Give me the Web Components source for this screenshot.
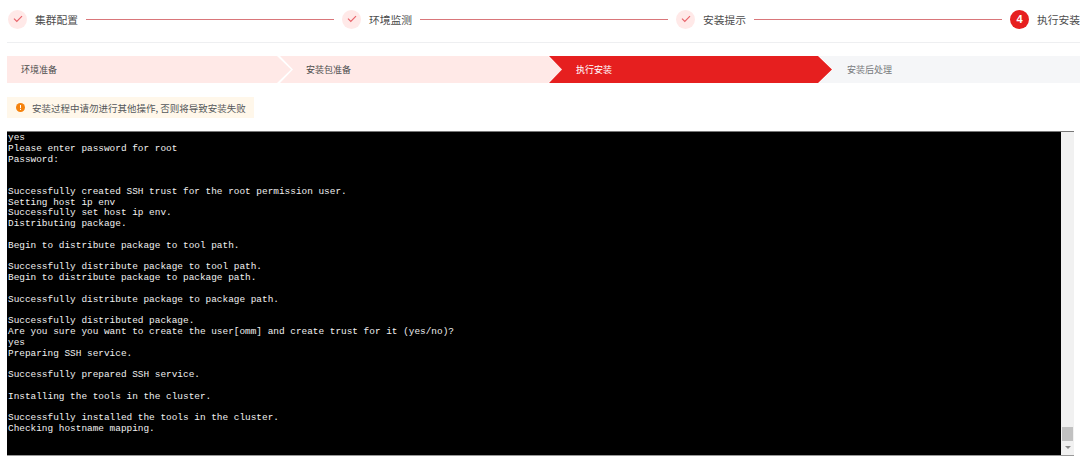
<!DOCTYPE html>
<html>
<head>
<meta charset="utf-8">
<style>
  html, body { margin: 0; padding: 0; background: #fff; overflow: hidden; }
  body { width: 1080px; height: 468px; font-family: "Noto Sans CJK SC", "Liberation Sans", sans-serif; }
</style>
</head>
<body>
<install-page>
  <step-bar slot="steps">
    <step-item done>集群配置</step-item>
    <step-item done>环境监测</step-item>
    <step-item done>安装提示</step-item>
    <step-item num="4">执行安装</step-item>
  </step-bar>
  <stage-bar slot="stages">
    <stage-item state="done">环境准备</stage-item>
    <stage-item state="done">安装包准备</stage-item>
    <stage-item state="active">执行安装</stage-item>
    <stage-item state="todo" last>安装后处理</stage-item>
  </stage-bar>
  <warn-tip slot="tip">安装过程中请勿进行其他操作, 否则将导致安装失败</warn-tip>
  <term-log slot="log"></term-log>
</install-page>

<script>
class InstallPage extends HTMLElement {
  constructor() {
    super();
    this.attachShadow({ mode: 'open' }).innerHTML = `
      <style>
        :host { display: flex; flex-direction: column; width: 1080px; height: 468px; box-sizing: border-box; padding: 0 0 0 7px; }
        .top { height: 42px; border-bottom: 1px solid #eeeff1; }
        .stages { margin-top: 13px; }
        .tip { margin-top: 14px; display: flex; }
        .log { margin-top: 13px; }
      </style>
      <div class="top"><slot name="steps"></slot></div>
      <div class="stages"><slot name="stages"></slot></div>
      <div class="tip"><slot name="tip"></slot></div>
      <div class="log"><slot name="log"></slot></div>`;
  }
}

class StepBar extends HTMLElement {
  constructor() {
    super();
    this.attachShadow({ mode: 'open' }).innerHTML = `
      <style>
        :host { display: flex; align-items: center; height: 38px; padding-left: 1px; width: 1100px; }
      </style>
      <slot></slot>`;
  }
}

class StepItem extends HTMLElement {
  constructor() {
    super();
    const num = this.getAttribute('num');
    const check = `<svg width="10" height="8" viewBox="0 0 10 8"><path d="M1 3.6 L3.8 6.4 L9 1.2" fill="none" stroke="#e8636a" stroke-width="1.2"/></svg>`;
    this.attachShadow({ mode: 'open' }).innerHTML = `
      <style>
        :host { display: flex; align-items: center; font-size: 10.75px; color: #4d4d4d; }
        :host([done]) { flex: 0 0 334px; }
        .dot { width: 19px; height: 19px; border-radius: 50%; background: #ffe9e8; display: flex; align-items: center; justify-content: center; flex: none; }
        .dot.on { background: #e61f1f; color: #fff; font: bold 11px "Liberation Sans", sans-serif; }
        .label { margin-left: 8px; white-space: nowrap; }
        .line { flex: 1; height: 1px; background: #d9767a; margin: 0 8px; }
      </style>
      <span class="dot ${num ? 'on' : ''}">${num || check}</span>
      <span class="label"><slot></slot></span>
      ${num ? '' : '<span class="line"></span>'}`;
  }
}

class StageBar extends HTMLElement {
  constructor() {
    super();
    this.attachShadow({ mode: 'open' }).innerHTML = `
      <style>
        :host { display: flex; height: 27px; width: 1073px; }
      </style>
      <slot></slot>`;
  }
}

class StageItem extends HTMLElement {
  constructor() {
    super();
    this.attachShadow({ mode: 'open' }).innerHTML = `
      <style>
        :host { flex: 0 0 284px; margin-right: -13px; height: 27px; display: block; font-size: 9px; color: #4d4d4d; }
        :host([state="active"]) { flex-basis: 283px; }
        :host([last]) { flex: 1; margin-right: 0; }
        .shape { height: 100%; box-sizing: border-box; padding-left: 28px; display: flex; align-items: center;
                 clip-path: polygon(2px 0, calc(100% - 14px) 0, 100% 50%, calc(100% - 14px) 100%, 2px 100%, 15px 50%); }
        :host([state="done"]) .shape { background: #ffe9e7; }
        :host([state="active"]) .shape { background: #e61f1f; color: #fff; padding-left: 27px; clip-path: polygon(0 0, calc(100% - 14px) 0, 100% 50%, calc(100% - 14px) 100%, 0 100%, 13px 50%); }
        :host([state="todo"]) .shape { background: #f5f6f8; color: #77797c; clip-path: polygon(0 0, 100% 0, 100% 100%, 0 100%, 14px 50%); }
        :host(:first-child) .shape { padding-left: 14px; clip-path: polygon(0 0, calc(100% - 14px) 0, 100% 50%, calc(100% - 14px) 100%, 0 100%); }
      </style>
      <div class="shape"><slot></slot></div>`;
  }
}

class WarnTip extends HTMLElement {
  constructor() {
    super();
    this.attachShadow({ mode: 'open' }).innerHTML = `
      <style>
        :host { display: flex; align-items: center; height: 21px; padding: 0 0 0 9px; width: 238px; background: #fff7ea; font-size: 9.5px; color: #55575a; white-space: nowrap; }
        svg { margin-right: 7px; flex: none; }
      </style>
      <svg width="9" height="9" viewBox="0 0 9 9"><circle cx="4.5" cy="4.5" r="4.5" fill="#f5820d"/><rect x="4" y="2" width="1" height="3.2" fill="#fff"/><rect x="4" y="6" width="1" height="1" fill="#fff"/></svg>
      <slot></slot>`;
  }
}

const LOG = `yes
Please enter password for root
Password:


Successfully created SSH trust for the root permission user.
Setting host ip env
Successfully set host ip env.
Distributing package.

Begin to distribute package to tool path.

Successfully distribute package to tool path.
Begin to distribute package to package path.

Successfully distribute package to package path.

Successfully distributed package.
Are you sure you want to create the user[omm] and create trust for it (yes/no)?
yes
Preparing SSH service.

Successfully prepared SSH service.

Installing the tools in the cluster.

Successfully installed the tools in the cluster.
Checking hostname mapping.`;

class TermLog extends HTMLElement {
  constructor() {
    super();
    this.attachShadow({ mode: 'open' }).innerHTML = `
      <style>
        :host { display: flex; height: 325px; width: 1067px; background: #000; border-top: 1px solid #777; border-bottom: 1px solid #999; box-sizing: border-box; }
        pre { flex: 1; margin: 0; padding: 1px 0 0 1px; color: #f0f0f0; font: 9.42px/10.78px "Liberation Mono", monospace; overflow: hidden; }
        .bar { width: 13px; background: #f1f1f1; display: flex; flex-direction: column; justify-content: flex-end; align-items: center; padding-bottom: 6px; box-sizing: border-box; }
        .thumb { width: 11px; height: 14px; background: #c1c1c1; margin-bottom: 5px; }
        .arrow { width: 0; height: 0; border: 3px solid transparent; border-top: 3px solid #8a8a8a; border-bottom: 0; }
      </style>
      <pre></pre>
      <div class="bar"><div class="thumb"></div><div class="arrow"></div></div>`;
    this.shadowRoot.querySelector('pre').textContent = LOG;
  }
}

customElements.define('install-page', InstallPage);
customElements.define('step-bar', StepBar);
customElements.define('step-item', StepItem);
customElements.define('stage-bar', StageBar);
customElements.define('stage-item', StageItem);
customElements.define('warn-tip', WarnTip);
customElements.define('term-log', TermLog);
</script>
</body>
</html>
